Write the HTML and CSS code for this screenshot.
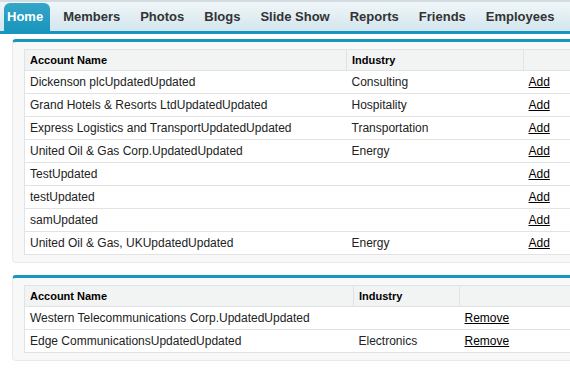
FILE: index.html
```html
<!DOCTYPE html>
<html>
<head>
<meta charset="utf-8">
<link rel="stylesheet" href="styles.css">
</head>
<body>
<div class="tabbar">
  <div class="tab tab-home">Home</div>
  <div class="tab">Members</div>
  <div class="tab">Photos</div>
  <div class="tab">Blogs</div>
  <div class="tab">Slide Show</div>
  <div class="tab">Reports</div>
  <div class="tab">Friends</div>
  <div class="tab">Employees</div>
</div>
<div class="content">
  <div class="block">
    <table class="list list-add">
      <colgroup><col class="c-name"><col class="c-ind"><col></colgroup>
      <thead>
        <tr><th>Account Name</th><th>Industry</th><th></th></tr>
      </thead>
      <tbody>
        <tr><td>Dickenson plcUpdatedUpdated</td><td>Consulting</td><td><a href="#">Add</a></td></tr>
        <tr><td>Grand Hotels &amp; Resorts LtdUpdatedUpdated</td><td>Hospitality</td><td><a href="#">Add</a></td></tr>
        <tr><td>Express Logistics and TransportUpdatedUpdated</td><td>Transportation</td><td><a href="#">Add</a></td></tr>
        <tr><td>United Oil &amp; Gas Corp.UpdatedUpdated</td><td>Energy</td><td><a href="#">Add</a></td></tr>
        <tr><td>TestUpdated</td><td></td><td><a href="#">Add</a></td></tr>
        <tr><td>testUpdated</td><td></td><td><a href="#">Add</a></td></tr>
        <tr><td>samUpdated</td><td></td><td><a href="#">Add</a></td></tr>
        <tr><td>United Oil &amp; Gas, UKUpdatedUpdated</td><td>Energy</td><td><a href="#">Add</a></td></tr>
      </tbody>
    </table>
  </div>
  <div class="block">
    <table class="list list-remove">
      <colgroup><col class="c-name"><col class="c-ind"><col></colgroup>
      <thead>
        <tr><th>Account Name</th><th>Industry</th><th></th></tr>
      </thead>
      <tbody>
        <tr><td>Western Telecommunications Corp.UpdatedUpdated</td><td></td><td><a href="#">Remove</a></td></tr>
        <tr><td>Edge CommunicationsUpdatedUpdated</td><td>Electronics</td><td><a href="#">Remove</a></td></tr>
      </tbody>
    </table>
  </div>
</div>
</body>
</html>
```
FILE: styles.css
```css
html, body {
  margin: 0;
  padding: 0;
  overflow: hidden;
  background: #ffffff;
}
body {
  font-family: "Liberation Sans", Arial, sans-serif;
  color: #222222;
  width: 570px;
}
.tabbar {
  display: flex;
  align-items: flex-end;
  height: 34px;
  box-sizing: border-box;
  border-top: 2px solid #d3dde1;
  border-bottom: 3px solid #1797c0;
  background: linear-gradient(#f0f6f8, #d3e6ee);
  padding-left: 4px;
  white-space: nowrap;
}
.tab {
  height: 28px;
  line-height: 27px;
  padding: 0 10px;
  font-size: 13px;
  font-weight: bold;
  color: #333333;
  flex: none;
}
.tab-home {
  padding: 0 7px 0 3px;
  margin-right: 3px;
  color: #ffffff;
  background: linear-gradient(#35a6c9, #1a95bc);
  border-radius: 6px 6px 0 0;
}
.content {
  padding: 5px 0 0 12px;
}
.block {
  width: 640px;
  margin-bottom: 12px;
  background: #f8f8f8;
  border: 1px solid #eaeaea;
  border-top: 3px solid #1797c0;
  border-radius: 4px;
  padding: 7px 11px 7px 11px;
}
.list {
  width: 100%;
  table-layout: fixed;
  border-collapse: collapse;
  background: #ffffff;
  border: 1px solid #e0e3e5;
}
.list-add .c-name { width: 322px; }
.list-add .c-ind { width: 177px; }
.list-remove .c-name { width: 329px; }
.list-remove .c-ind { width: 106px; }
.list th {
  background: #f2f3f3;
  font-size: 11px;
  font-weight: bold;
  color: #000000;
  text-align: left;
  height: 21px;
  padding: 0 5px;
  border-bottom: 1px solid #e0e3e5;
  border-left: 1px solid #e0e3e5;
  box-sizing: border-box;
}
.list th:first-child {
  border-left: none;
}
.list td {
  font-size: 12px;
  height: 22px;
  padding: 0 5px;
  border-bottom: 1px solid #e3e3e3;
  white-space: nowrap;
  overflow: hidden;
  color: #222222;
}
.list a {
  color: #000000;
  text-decoration: underline;
}
```
